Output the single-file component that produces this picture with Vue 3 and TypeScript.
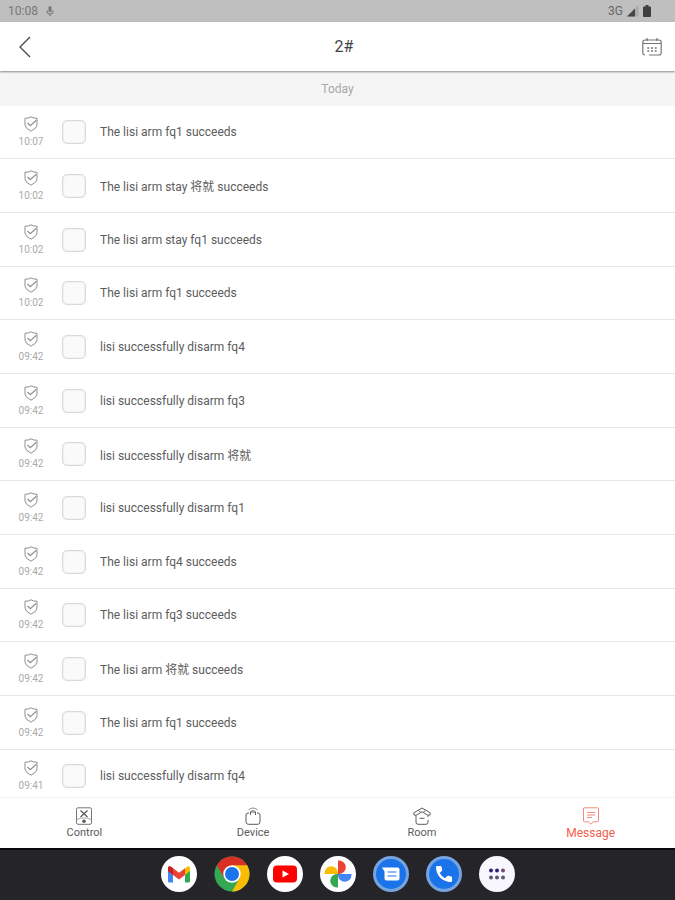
<script setup lang="ts">
import { ref } from 'vue'

interface LogEntry {
  id: number
  time: string
  text: string
  selected: boolean
}

type Tab = 'Control' | 'Device' | 'Room' | 'Message'

const source: [string, string][] = [
  ['10:07', 'The lisi arm fq1 succeeds'],
  ['10:02', 'The lisi arm stay 将就 succeeds'],
  ['10:02', 'The lisi arm stay fq1 succeeds'],
  ['10:02', 'The lisi arm fq1 succeeds'],
  ['09:42', 'lisi successfully disarm fq4'],
  ['09:42', 'lisi successfully disarm fq3'],
  ['09:42', 'lisi successfully disarm 将就'],
  ['09:42', 'lisi successfully disarm fq1'],
  ['09:42', 'The lisi arm fq4 succeeds'],
  ['09:42', 'The lisi arm fq3 succeeds'],
  ['09:42', 'The lisi arm 将就 succeeds'],
  ['09:42', 'The lisi arm fq1 succeeds'],
  ['09:41', 'lisi successfully disarm fq4'],
]

const entries = ref<LogEntry[]>(
  source.map(([time, text], id) => ({ id, time, text, selected: false })),
)
const tabs: Tab[] = ['Control', 'Device', 'Room', 'Message']
const activeTab = ref<Tab>('Message')
</script>

<template>
  <div class="screen">
    <div class="status">
      <span>10:08</span>
      <svg class="mic" width="8" height="12" viewBox="0 0 8 12">
        <rect x="2.5" y="1" width="3" height="6" rx="1.5" fill="#777" />
        <path d="M1 5.5C1 8 2.2 9 4 9s3-1 3-3.500M4 9v2" fill="none" stroke="#777" stroke-width="1.200" />
      </svg>
      <span class="network">3G</span>
      <svg width="12" height="12" viewBox="0 0 12 12">
        <path d="M11.500 0v11.500H0z" fill="#aaa" />
        <path d="M8 3.500v8H0z" fill="#444" />
      </svg>
      <svg class="battery" width="8" height="12" viewBox="0 0 8 12">
        <path d="M2.500 0h3v1.500h1.700q.8 0 .8.800v8.900q0 .8-.8.800H.8q-.8 0-.8-.8V2.300q0-.8.800-.8h1.700z" fill="#3f3f3f" />
      </svg>
    </div>

    <header class="header">
      <button class="icon-button back" type="button" aria-label="Back">
        <svg width="14" height="22" viewBox="0 0 14 22">
          <path d="M12 1 2 11l10 10" fill="none" stroke="#444" stroke-width="1.300" />
        </svg>
      </button>
      <h1>2#</h1>
      <button class="icon-button" type="button" aria-label="Choose date">
        <svg width="20" height="20" viewBox="0 0 20 20" fill="none" stroke="#777" stroke-width="1.200">
          <path d="M3 18Q.8 18 .8 15.500V5.500Q.8 3 3 3h14q2.200 0 2.200 2.500v10q0 2.500-2.200 2.500H7M1 6.500h18" />
          <path d="M5 1.200v2.600M15 1.200v2.600" stroke-width="1.600" />
          <path d="M5.300 11h2M9 11h2M12.700 11h2M5.300 14h2M9 14h2M12.700 14h2" stroke-width="1.500" />
        </svg>
      </button>
    </header>

    <main class="content">
      <h2 class="day">Today</h2>
      <ul class="log">
        <li v-for="entry in entries" :key="entry.id" class="row">
          <div class="stamp">
            <svg width="14" height="16" viewBox="0 0 14 16" fill="none" stroke="#8f8f8f">
              <path d="M7 .8Q4.500 2.500 1 2.200V9q0 3.300 6 6.200Q13 12.300 13 9V2.200Q9.500 2.500 7 .8z" />
              <path d="m3.500 7 2.800 2.700 6-5.400" stroke-width="1.200" />
            </svg>
            <time>{{ entry.time }}</time>
          </div>
          <input :id="`entry-${entry.id}`" v-model="entry.selected" type="checkbox" class="box" />
          <label :for="`entry-${entry.id}`">{{ entry.text }}</label>
        </li>
      </ul>
    </main>

    <nav class="tabs">
      <button
        v-for="tab in tabs"
        :key="tab"
        type="button"
        class="tab"
        :class="{ active: tab === activeTab }"
        @click="activeTab = tab"
      >
        <svg width="18" height="18" viewBox="0 0 18 18" fill="none" stroke="currentColor">
          <template v-if="tab === 'Control'">
            <rect x="1.500" y=".8" width="15" height="16.500" rx="1.500" stroke="#777" />
            <path d="m5.500 3.500 7 6.500M12.500 3.500l-7 6.500" stroke-width="1.300" />
            <path d="M2 12.500 6 11h6l4 1.500" stroke="#aaa" />
            <circle cx="9" cy="14.300" r="1.800" fill="currentColor" stroke="none" />
          </template>
          <template v-else-if="tab === 'Device'">
            <path d="M5 6H4Q2 6 2 8v7q0 2.300 2.300 2.300h9.400Q16 17.300 16 15V8q0-2-2-2h-1M6.500 8V5h5v3" />
            <path d="M4.500 2.800Q9-.8 13.500 2.800M6.300 4.500q2.700-2 5.400 0" stroke="#888" />
          </template>
          <template v-else-if="tab === 'Room'">
            <path d="M1 8 .8 5.800 9 1l8.200 4.800L17 8l-2 .3L9 4.800 3 8.300z" />
            <path d="M3 8.500V15q0 2.300 2 2.300h8q2 0 2-2V13M15 10V8.500M6.500 11.300h5M5.500 3.500 7.500 5M12.500 3.500l-2 1.500" />
          </template>
          <template v-else>
            <path d="M2.500.8h13q1 0 1 1v12q0 1-1 1h-4L9 17.200l-2.500-2.400h-4q-1 0-1-1v-12q0-1 1-1z" opacity=".75" />
            <path d="M5 5.500h8M5 8h8M5 10.500h5" opacity=".75" />
          </template>
        </svg>
        <span>{{ tab }}</span>
      </button>
    </nav>

    <div class="dock">
      <button class="app" type="button" aria-label="Mail">
        <svg viewBox="0 0 36 36">
          <circle cx="18" cy="18" r="18" fill="#fff" />
          <path d="M7 13v12q0 1.500 1.500 1.500H12V15z" fill="#4285f4" />
          <path d="M24 15v11.500h3.500q1.500 0 1.500-1.500V13z" fill="#34a853" />
          <path d="m24 12.500 1.500-1.500Q29 9 29 12.500V15l-5 4z" fill="#fbbc04" />
          <path d="M7 15v-2.500Q7 9 10.500 11l7.500 5.700 6-4.500V19l-6 4.500L12 19z" fill="#ea4335" />
          <path d="M7 12.500Q7 9 10.500 11l1.500 1.200V19l-5-4z" fill="#c5221f" />
        </svg>
      </button>
      <button class="app" type="button" aria-label="Browser">
        <svg viewBox="0 0 36 36">
          <circle cx="18" cy="18" r="17.500" fill="#34a853" />
          <path d="M2.850 9.250A17.500 17.500 0 0 1 33.150 9.250L18 18z" fill="#d93025" />
          <path d="M2.850 9.250 10.400 22.300 18 10z" fill="#d93025" />
          <path d="M33.150 9.250A17.500 17.500 0 0 1 18 35.500L25.600 22.300 18 9.250z" fill="#fbbc04" />
          <circle cx="18" cy="18" r="8.700" fill="#fff" />
          <circle cx="18" cy="18" r="7" fill="#1a73e8" />
        </svg>
      </button>
      <button class="app" type="button" aria-label="Videos">
        <svg viewBox="0 0 36 36">
          <circle cx="18" cy="18" r="18" fill="#fff" />
          <rect x="6" y="9.500" width="24" height="17" rx="4" fill="#f00" />
          <path d="m15.500 14.500 6.500 3.500-6.500 3.500z" fill="#fff" />
        </svg>
      </button>
      <button class="app" type="button" aria-label="Photos">
        <svg viewBox="0 0 36 36">
          <circle cx="18" cy="18" r="18" fill="#fff" />
          <path d="M18 4.500h1a6.500 6.500 0 0 1 0 13.500h-1z" fill="#ea4335" />
          <path d="M31.500 18v1a6.500 6.500 0 0 1-13.500 0v-1z" fill="#4285f4" />
          <path d="M18 31.500h-1a6.500 6.500 0 0 1 0-13.500h1z" fill="#34a853" />
          <path d="M4.500 18v-1a6.500 6.500 0 0 1 13.500 0v1z" fill="#fbbc04" />
        </svg>
      </button>
      <button class="app" type="button" aria-label="Messages">
        <svg viewBox="0 0 36 36">
          <circle cx="18" cy="18" r="18" fill="#76a4df" />
          <circle cx="18" cy="18" r="15" fill="#1a73e8" />
          <path d="M9 11.500h15.500q2 0 2 2v9q0 2-2 2h-11q-2 0-2-2v-7z" fill="#fff" />
          <path d="M14.500 16h9M14.500 20h9" stroke="#6ba3ee" stroke-width="1.500" />
        </svg>
      </button>
      <button class="app" type="button" aria-label="Phone">
        <svg viewBox="0 0 36 36">
          <circle cx="18" cy="18" r="18" fill="#76a4df" />
          <circle cx="18" cy="18" r="15" fill="#1a73e8" />
          <path d="M11 10h3.500q.8 0 1 .8l.7 3q.1.700-.4 1.200L13.700 17q1.800 3.500 5.300 5.300l2-2.100q.5-.5 1.200-.4l3 .7q.8.200.8 1V25q0 1-1 1C16.500 26 10 19.500 10 11q0-1 1-1z" fill="#fff" />
        </svg>
      </button>
      <button class="app" type="button" aria-label="All apps">
        <svg viewBox="0 0 36 36">
          <circle cx="18" cy="18" r="18" fill="#f8f7ff" />
          <g fill="#26247b">
            <circle cx="12" cy="14.500" r="2" />
            <circle cx="18" cy="14.500" r="2" />
            <circle cx="24" cy="14.500" r="2" fill="#704b76" />
          </g>
          <g fill="#5a5872">
            <circle cx="12" cy="21.500" r="2" />
            <circle cx="18" cy="21.500" r="2" />
            <circle cx="24" cy="21.500" r="2" />
          </g>
        </svg>
      </button>
    </div>
  </div>
</template>

<style>
body {
  margin: 0;
}
</style>

<style scoped>
.screen {
  display: flex;
  flex-direction: column;
  height: 100vh;
  overflow: hidden;
  background: #fff;
  color: #5c5c5c;
  font-family: Roboto, "Noto Sans CJK SC", sans-serif;
}

button {
  padding: 0;
  border: 0;
  background: none;
  color: inherit;
  font: inherit;
}

svg {
  display: block;
  flex: none;
}

.status {
  display: flex;
  flex: none;
  align-items: center;
  height: 22px;
  padding: 0 24px 0 8px;
  background: #bfbfbf;
  color: #777;
  font-size: 12px;
}

.mic {
  margin-left: 8px;
}

.network {
  margin: 0 4px 0 auto;
  color: #666;
}

.battery {
  margin-left: 4px;
}

.header {
  position: relative;
  display: flex;
  flex: none;
  align-items: center;
  justify-content: space-between;
  height: 49px;
  padding: 0 13px 0 18px;
  background: #fff;
  box-shadow: 0 1px 2px #888;
}

.header h1 {
  margin: 0;
  color: #444;
  font-size: 16px;
  font-weight: 400;
}

.icon-button {
  display: flex;
}

.back {
  width: 28px;
}

.content {
  flex: 1;
  min-height: 0;
  overflow: hidden;
}

.day {
  margin: 0;
  padding-top: 1px;
  background: #f5f5f5;
  color: #a8a8a8;
  font-size: 12px;
  font-weight: 400;
  line-height: 34px;
  text-align: center;
}

.log {
  display: grid;
  grid-auto-rows: 53px 54px 54px;
  margin: 0;
  padding: 0;
  list-style: none;
}

.row {
  display: flex;
  align-items: center;
  border-bottom: 1px solid #e6e6e6;
  font-size: 12px;
}

.stamp {
  display: flex;
  flex-direction: column;
  align-items: center;
  gap: 4px;
  width: 62px;
  color: #aaa;
  font-size: 10px;
  line-height: 12px;
}

.box {
  width: 24px;
  height: 24px;
  margin: 0 14px 0 0;
  border: 1px solid #d9d9d9;
  border-radius: 5px;
  appearance: none;
  background: #fafafa;
  box-shadow: inset 0 0 2px #ddd;
}

.box:checked {
  background: #f0604d;
}

.tabs {
  display: grid;
  flex: none;
  grid-template-columns: repeat(4, 1fr);
  height: 50px;
  border-top: 1px solid #f3f3f3;
  background: #fff;
}

.tab {
  display: flex;
  flex-direction: column;
  align-items: center;
  justify-content: center;
  gap: 2px;
  font-size: 11px;
  line-height: 12px;
}

.tab.active {
  color: #f0604d;
  font-size: 12px;
}

.dock {
  display: flex;
  flex: none;
  align-items: center;
  justify-content: center;
  gap: 17px;
  height: 48px;
  padding-bottom: 2px;
  border-top: 2px solid #08080a;
  background: #242429;
}

.app {
  width: 36px;
  height: 36px;
}
</style>
